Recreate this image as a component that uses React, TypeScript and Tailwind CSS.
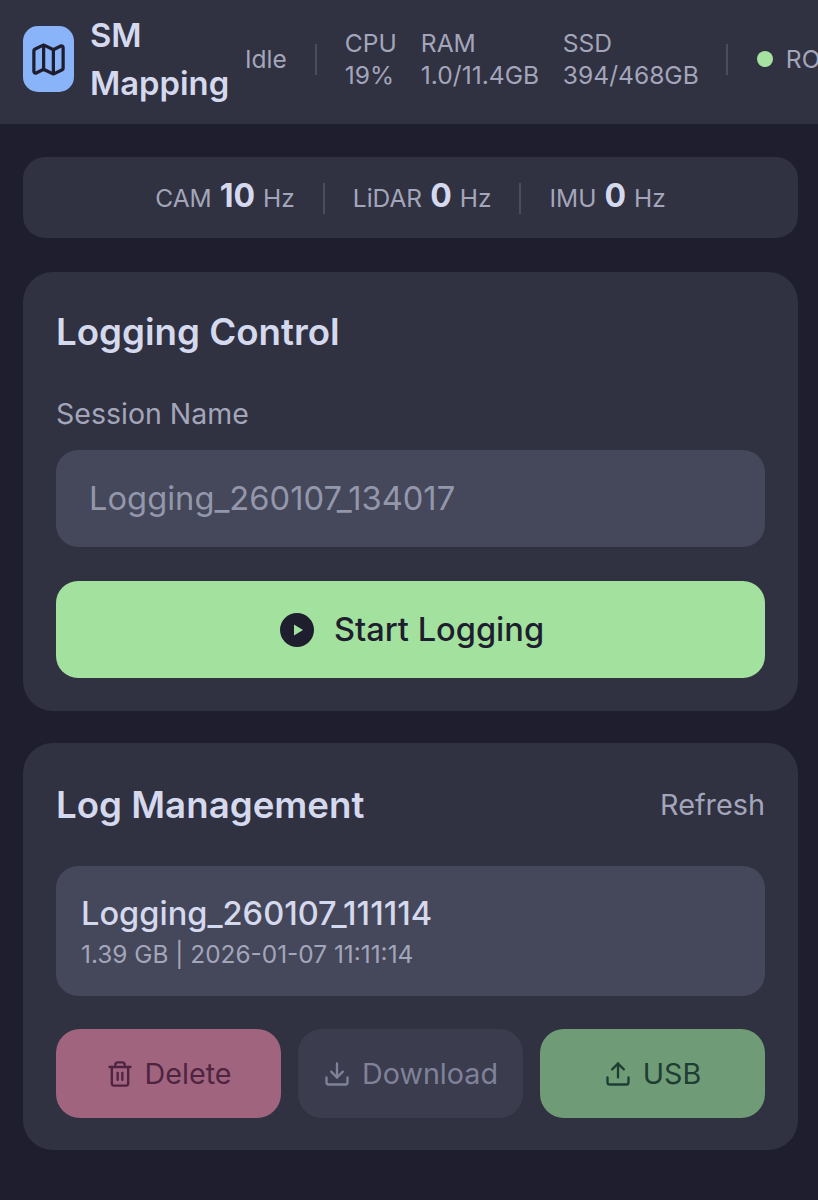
import { Download, Map as MapIcon, Trash2, Upload } from 'lucide-react';

const Divider = ({ className }: { className: string }) => <div className={`w-[2px] shrink-0 bg-[#4a4c5f] ${className}`} />;

const Rate = ({ label, value }: { label: string; value: string }) => (
    <div className="flex items-baseline gap-[8px] text-[24.5px] text-[#a3a6ba]">
        <span>{label}</span>
        <span className="text-[32px] leading-none font-bold text-[#d5d9ee]">{value}</span>
        <span>Hz</span>
    </div>
);

const Stat = ({ label, value, className }: { label: string; value: string; className: string }) => (
    <div className={`shrink-0 text-[24.6px] leading-[32px] text-[#a3a6ba] ${className}`}>
        <div>{label}</div>
        <div>{value}</div>
    </div>
);

const App = () => {
    return (
        <div className="h-[1200px] w-[818px] overflow-hidden bg-[#1e1e2e] font-['Inter',sans-serif]">
            {/* Header */}
            <header className="flex h-[124px] items-center overflow-hidden bg-[#303141] pb-[6px] pl-[23px] whitespace-nowrap">
                <div className="flex h-[66px] w-[51px] shrink-0 items-center justify-center rounded-[15px] bg-[#89b4fa]">
                    <MapIcon className="h-[39px] w-[39px] text-[#1e1e2e]" strokeWidth={2} />
                </div>
                <div className="ml-[16px] w-[155px] shrink-0 text-[32.8px] leading-[48px] font-semibold text-[#d5d9ee]">
                    <div>SM</div>
                    <div>Mapping</div>
                </div>
                <span className="shrink-0 text-[24.5px] text-[#a3a6ba]">Idle</span>
                <Divider className="ml-[28px] h-[31px]" />
                <Stat label="CPU" value="19%" className="ml-[28px] w-[76px]" />
                <Stat label="RAM" value="1.0/11.4GB" className="w-[142px]" />
                <Stat label="SSD" value="394/468GB" className="w-[163px]" />
                <Divider className="h-[31px]" />
                <div className="ml-[29px] h-[16px] w-[16px] shrink-0 rounded-full bg-[#a6e3a1]" />
                <span className="ml-[13px] shrink-0 text-[24.6px] text-[#a3a6ba]">ROS</span>
            </header>

            <main className="flex flex-col pt-[33px] pr-[20px] pl-[23px]">
                {/* Sensor rates */}
                <div className="flex h-[81px] items-center justify-center gap-[28px] rounded-[22px] bg-[#303141] pt-[2px]">
                    <Rate label="CAM" value="10" />
                    <Divider className="h-[31px]" />
                    <Rate label="LiDAR" value="0" />
                    <Divider className="h-[31px]" />
                    <Rate label="IMU" value="0" />
                </div>

                {/* Logging Control */}
                <section className="mt-[34px] flex h-[439px] flex-col rounded-[30px] bg-[#303141] px-[33px] pt-[39px]">
                    <h2 className="text-[36.7px] leading-[42px] font-semibold text-[#d5d9ee]">Logging Control</h2>
                    <label className="mt-[45px] text-[28.5px] leading-[32px] text-[#a3a6ba]">Session Name</label>
                    <div className="mt-[20px] flex h-[97px] items-center rounded-[22px] bg-[#45475a] px-[33px] text-[32.7px] text-[#9397ac]">
                        Logging_260107_134017
                    </div>
                    <button className="mt-[34px] flex h-[97px] items-center justify-center gap-[20px] rounded-[22px] bg-[#a3e29e] pl-[3px] text-[32.6px] font-medium text-[#1e1e2e]">
                        <svg viewBox="0 0 34 34" className="h-[34px] w-[34px]">
                            <circle cx="17" cy="17" r="17" fill="#1e1e2e" />
                            <path d="M14 11.5 L23 17 L14 22.5 Z" fill="#a3e29e" />
                        </svg>
                        Start Logging
                    </button>
                </section>

                {/* Log Management */}
                <section className="mt-[32px] flex h-[407px] flex-col rounded-[30px] bg-[#303141] px-[33px] pt-[40px]">
                    <div className="flex items-center justify-between">
                        <h2 className="text-[36.7px] leading-[42px] font-semibold text-[#d5d9ee]">Log Management</h2>
                        <span className="text-[28.8px] text-[#a3a6ba]">Refresh</span>
                    </div>
                    <div className="mt-[40px] flex h-[130px] flex-col justify-center rounded-[22px] bg-[#45475a] px-[25px] pt-[2px]">
                        <div className="text-[32.6px] leading-[40px] font-medium text-[#d5d9ee]">Logging_260107_111114</div>
                        <div className="mt-[4px] text-[24.4px] leading-[34px] text-[#a3a6ba]">1.39 GB | 2026-01-07 11:11:14</div>
                    </div>
                    <div className="mt-[33px] grid grid-cols-3 gap-[17px]">
                        <button className="flex h-[89px] items-center justify-center gap-[11px] rounded-[24px] bg-[#a0647f] text-[28.7px] text-[#4f2440]">
                            <Trash2 className="h-[28px] w-[28px]" strokeWidth={2} />
                            Delete
                        </button>
                        <button className="flex h-[89px] items-center justify-center gap-[11px] rounded-[24px] bg-[#3b3c4e] text-[28.7px] text-[#7f8298]">
                            <Download className="h-[28px] w-[28px]" strokeWidth={2} />
                            Download
                        </button>
                        <button className="flex h-[89px] items-center justify-center gap-[11px] rounded-[24px] bg-[#6f9c77] text-[28.7px] text-[#1e3d33]">
                            <Upload className="h-[28px] w-[28px]" strokeWidth={2} />
                            USB
                        </button>
                    </div>
                </section>
            </main>
        </div>
    );
};

export default App;
